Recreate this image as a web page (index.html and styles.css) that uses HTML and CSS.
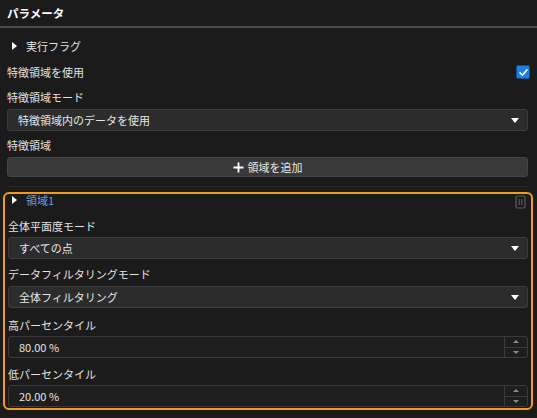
FILE: index.html
```html
<!DOCTYPE html>
<html lang="ja">
<head>
    <meta charset="UTF-8">
    <meta name="viewport" content="width=device-width, initial-scale=1.0">
    <title>パラメータ</title>
    <link rel="stylesheet" href="styles.css">
</head>
<body>
    <div class="panel">
        <div class="panel-header">パラメータ</div>

        <div class="panel-body">
            <div class="fold-row">
                <span class="fold-arrow"></span>
                <span>実行フラグ</span>
            </div>

            <div class="check-row">
                <span>特徴領域を使用</span>
                <span class="checkbox">
                    <svg width="11" height="11" viewBox="0 0 11 11">
                        <path d="M2 5.8 L4.4 8.2 L9 2.8" fill="none" stroke="#fff" stroke-width="1.6" stroke-linecap="round" stroke-linejoin="round"/>
                    </svg>
                </span>
            </div>

            <div class="field-label">特徴領域モード</div>
            <div class="select">
                <span>特徴領域内のデータを使用</span>
                <span class="select-arrow"></span>
            </div>

            <div class="field-label">特徴領域</div>
            <div class="add-btn">
                <svg width="11" height="11" viewBox="0 0 11 11">
                    <path d="M5.5 0.5 V10.5 M0.5 5.5 H10.5" stroke="#fff" stroke-width="1.8"/>
                </svg>
                <span>領域を追加</span>
            </div>

            <div class="divider"></div>
        </div>

        <div class="region-box">
            <div class="region-head">
                <div class="fold-row region-title">
                    <span class="fold-arrow"></span>
                    <span>領域1</span>
                </div>
                <svg class="trash" width="11" height="14" viewBox="0 0 11 14">
                    <rect x="1" y="1" width="9" height="12" rx="1.5" fill="none" stroke="#5c5c5c" stroke-width="1.2"/>
                    <path d="M4.2 4 V10 M6.8 4 V10" stroke="#5c5c5c" stroke-width="1.1"/>
                </svg>
            </div>

            <div class="field-label first">全体平面度モード</div>
            <div class="select tight">
                <span>すべての点</span>
                <span class="select-arrow"></span>
            </div>

            <div class="field-label">データフィルタリングモード</div>
            <div class="select">
                <span>全体フィルタリング</span>
                <span class="select-arrow"></span>
            </div>

            <div class="field-label spaced">高パーセンタイル</div>
            <div class="spin">
                <span class="spin-value">80.00 %</span>
                <div class="spin-btns">
                    <span class="spin-up"></span>
                    <span class="spin-down"></span>
                </div>
            </div>

            <div class="field-label spaced-sm">低パーセンタイル</div>
            <div class="spin">
                <span class="spin-value">20.00 %</span>
                <div class="spin-btns">
                    <span class="spin-up"></span>
                    <span class="spin-down"></span>
                </div>
            </div>
        </div>
    </div>
</body>
</html>
```

FILE: styles.css
```css
* {
    box-sizing: border-box;
}
body {
    margin: 0;
    background-color: #1b1b1b;
    color: #e2e2e2;
    font-family: "Noto Sans CJK JP", "Noto Sans", sans-serif;
    font-size: 11px;
}
.panel {
    width: 537px;
    height: 418px;
    overflow: hidden;
}
.panel-header {
    height: 28px;
    padding-left: 7px;
    display: flex;
    align-items: center;
    color: #ffffff;
    font-weight: bold;
    font-size: 11.5px;
    border-bottom: 2px solid #4a4a4a;
}
.panel-body {
    padding: 0 9px 0 7px;
}
.fold-row {
    display: flex;
    align-items: center;
    height: 22px;
    margin-top: 7px;
    padding-left: 5px;
}
.fold-arrow {
    width: 0;
    height: 0;
    border-top: 4px solid transparent;
    border-bottom: 4px solid transparent;
    border-left: 5px solid #ffffff;
    margin-right: 9px;
}
.check-row {
    display: flex;
    align-items: center;
    justify-content: space-between;
    height: 22px;
    margin-top: 4px;
}
.checkbox {
    width: 14px;
    height: 14px;
    margin-right: -2px;
    background-color: #1d7fe2;
    border: 1px solid #0e4f91;
    border-radius: 2px;
    display: flex;
    align-items: center;
    justify-content: center;
}
.field-label {
    height: 18px;
    display: flex;
    align-items: center;
    margin-top: 5px;
}
.select {
    height: 22px;
    margin-top: 3px;
    padding: 0 8px 0 10px;
    display: flex;
    align-items: center;
    justify-content: space-between;
    background-color: #2c2c2c;
    border: 1px solid #3c3c3c;
    border-radius: 3px;
    color: #e6e6e6;
}
.select-arrow {
    width: 0;
    height: 0;
    border-left: 4px solid transparent;
    border-right: 4px solid transparent;
    border-top: 5px solid #ffffff;
}
.add-btn {
    height: 20px;
    margin-top: 3px;
    display: flex;
    align-items: center;
    justify-content: center;
    gap: 4px;
    background-color: #393939;
    border: 1px solid #444444;
    border-radius: 3px;
    color: #e6e6e6;
}
.divider {
    height: 1px;
    margin-top: 9px;
    background-color: #2c2c2c;
}
.region-box {
    margin: 5px 4px 0 3px;
    height: 218px;
    padding: 0 3px 0 3px;
    border: 2px solid #f29b1c;
    border-radius: 6px;
}
.region-head {
    height: 12px;
    display: flex;
    justify-content: space-between;
    align-items: flex-start;
}
.region-title {
    height: 12px;
    margin-top: 0;
    padding-left: 4px;
    color: #6b9be0;
}
.trash {
    flex-shrink: 0;
    margin-top: 1px;
    margin-right: 2px;
}
.region-box .field-label {
    margin-top: 6px;
}
.region-box .field-label.first {
    margin-top: 11px;
}
.region-box .field-label.spaced {
    margin-top: 8px;
}
.region-box .field-label.spaced-sm {
    margin-top: 7px;
}
.select.tight {
    margin-top: 2px;
}
.spin {
    height: 22px;
    margin-top: 2px;
    display: flex;
    background-color: #1e1e1e;
    border: 1px solid #3a3a3a;
    border-radius: 3px;
}
.spin-value {
    flex: 1;
    display: flex;
    align-items: center;
    padding-left: 10px;
    color: #e6e6e6;
}
.spin-btns {
    width: 23px;
    border-left: 1px solid #3a3a3a;
    display: flex;
    flex-direction: column;
}
.spin-up,
.spin-down {
    flex: 1;
    display: flex;
    align-items: center;
    justify-content: center;
}
.spin-up {
    border-bottom: 1px solid #3a3a3a;
}
.spin-up::after {
    content: "";
    border-left: 3px solid transparent;
    border-right: 3px solid transparent;
    border-bottom: 3px solid #8a8a8a;
}
.spin-down::after {
    content: "";
    border-left: 3px solid transparent;
    border-right: 3px solid transparent;
    border-top: 3px solid #8a8a8a;
}
```
